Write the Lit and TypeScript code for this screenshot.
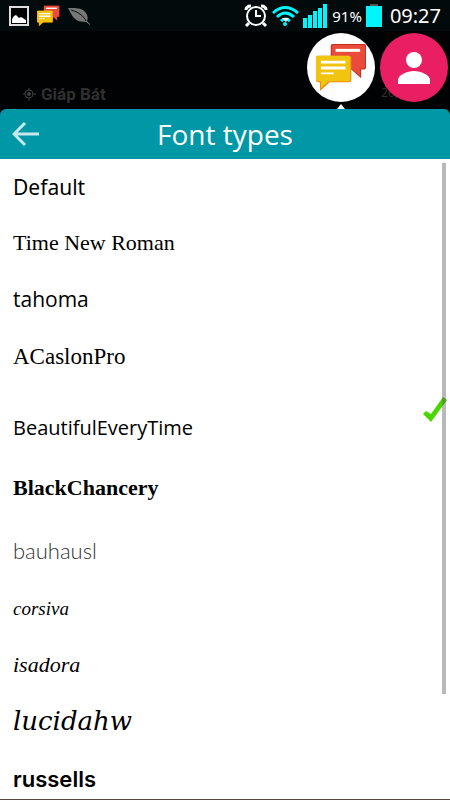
import { LitElement, html, css, svg } from "lit";
import { customElement, property, state } from "lit/decorators.js";

interface FontItem {
  name: string;
  style: string;
}

const FONTS: FontItem[] = [
  { name: "Default", style: "default" },
  { name: "Time New Roman", style: "times" },
  { name: "tahoma", style: "tahoma" },
  { name: "ACaslonPro", style: "caslon" },
  { name: "BeautifulEveryTime", style: "beautiful" },
  { name: "BlackChancery", style: "chancery" },
  { name: "bauhausl", style: "bauhaus" },
  { name: "corsiva", style: "corsiva" },
  { name: "isadora", style: "isadora" },
  { name: "lucidahw", style: "lucida" },
  { name: "russells", style: "russells" },
];

const chatBubbles = svg`
  <path d="M17 1h32q2 0 2 2v22q0 2-2 2h-3v9l-10-9H17q-2 0-2-2V3q0-2 2-2z" fill="#c62f20"/>
  <path d="M18 2h30q2 0 2 2v20q0 2-2 2h-3v8l-9-8H18q-2 0-2-2V4q0-2 2-2z" fill="#e94c3c"/>
  <path d="M20 6h25v3H20z" fill="#fff"/>
  <path d="M2 13h32q2 0 2 2v23q0 2-2 2H14l-10 9v-9H2q-2 0-2-2V15q0-2 2-2z" fill="#ee8d10"/>
  <path d="M2 13h31q2 0 2 2v22q0 2-2 2H13l-8 7v-7H2q-2 0-2-2V15q0-2 2-2z" fill="#f1c40f"/>
  <path d="M5 18h25v3H5zM5 24h25v3H5zM5 30h13v2H5z" fill="#fff"/>`;

@customElement("status-bar")
export class StatusBar extends LitElement {
  static styles = css`
    :host {
      display: flex;
      align-items: center;
      justify-content: space-between;
      height: 31px;
      padding: 0 9px;
      background: #020a0b;
      color: #fff;
      font-family: "Noto Sans", sans-serif;
    }
    .group {
      display: flex;
      align-items: center;
    }
    .left {
      gap: 8px;
    }
    .right {
      gap: 4px;
    }
    svg {
      display: block;
    }
    .percent {
      font-size: 15px;
      line-height: 30px;
    }
    .time {
      margin-left: 4px;
      font-size: 20px;
      line-height: 30px;
    }
  `;

  render() {
    return html`
      <div class="group left">
        <svg width="20" height="20" viewBox="0 0 20 20">
          <path d="M1 1h18v18H1z" fill="#000" stroke="#ddd" stroke-width="2" />
          <path d="M3 17v-4l2-3 2-1 2 2 1 1 2-1 2 1 1 1 2 1v3z" fill="#fff" />
        </svg>
        <svg width="23" height="22" viewBox="0 0 52 50">${chatBubbles}</svg>
        <svg width="23" height="18" viewBox="0 0 23 18">
          <path d="M0 1c6 0 14-1 18 5 2 3 2 6 1 8l3 3v1l-4-3c-5 0-9-1-12-4C3 8 2 4 0 1z" fill="#777" />
          <path d="M3 3c7 2 12 5 15 11" fill="none" stroke="#060d0e" />
        </svg>
      </div>
      <div class="group right">
        <svg width="24" height="24" viewBox="0 0 24 24" fill="none" stroke="#fff">
          <circle cx="12" cy="12" r="9" stroke-width="2" />
          <path d="M12 6v6h5" stroke-width="2" />
          <path d="M2 6q0-4 5-4M22 6q0-4-5-4" stroke-width="3" />
          <path d="M5 19l-3 3M19 19l3 3" stroke-width="3" />
        </svg>
        <svg width="27" height="22" viewBox="0 0 27 22">
          <g fill="none" stroke="#00f6ff" stroke-width="3">
            <path d="M1 8q12-11 25 0" />
            <path d="M5 12q8-8 17 0" />
            <path d="M9 16q4-4 9 0" />
          </g>
          <path d="M10 13h7l-3 4z" fill="#fff" />
          <circle cx="13" cy="19" r="2" fill="#00f6ff" />
        </svg>
        <svg width="25" height="24" viewBox="0 0 25 24" fill="#00f6ff">
          <path d="M0 14h4v10H0zM5 11h4v13H5zM10 7h4v17h-4zM15 4h4v20h-4zM20 0h4v24h-4z" />
        </svg>
        <span class="percent">91%</span>
        <svg width="16" height="23" viewBox="0 0 16 23">
          <path d="M4 0h8v2H4z" fill="#555" />
          <path d="M0 2h16v21H0z" fill="#00f6ff" />
        </svg>
        <span class="time">09:27</span>
      </div>
    `;
  }
}

@customElement("font-option")
export class FontOption extends LitElement {
  @property({ attribute: false }) item!: FontItem;
  @property({ type: Boolean }) selected = false;

  static styles = css`
    :host {
      display: block;
    }
    .row {
      display: flex;
      align-items: center;
      justify-content: space-between;
      box-sizing: border-box;
      height: 56px;
      padding: 0 3px 0 13px;
      color: #000;
      cursor: pointer;
      position: relative;
    }
    .radio {
      position: absolute;
      inset: 0;
      margin: 0;
      opacity: 0;
      cursor: pointer;
    }
    .check {
      display: block;
      align-self: flex-start;
    }
    .default {
      font: 21px "Noto Sans", sans-serif;
    }
    .tahoma {
      font: 21px "Open Sans", sans-serif;
    }
    .times {
      font: 22px "Liberation Serif", serif;
    }
    .caslon {
      height: 60px;
      font: 23px "Liberation Serif", serif;
    }
    .beautiful {
      height: 70px;
      padding-top: 10px;
      font: 20px "Open Sans", sans-serif;
    }
    .chancery {
      height: 62px;
      font: bold 22px "Liberation Serif", serif;
    }
    .bauhaus {
      height: 62px;
      font: 300 22px "Lato", sans-serif;
      color: #333;
    }
    .corsiva {
      font: italic 19px "Liberation Serif", serif;
    }
    .isadora {
      font: italic 22px "Liberation Serif", serif;
    }
    .lucida {
      font: italic 26px "DejaVu Serif", serif;
    }
    .russells {
      height: 60px;
      font: 600 22px "Inter", sans-serif;
    }
  `;

  render() {
    return html`
      <label class="row ${this.item.style}">
        <input
          class="radio"
          type="radio"
          name="font"
          .checked=${this.selected}
          @change=${() =>
            this.dispatchEvent(new CustomEvent("pick", { detail: this.item.name }))}
        />
        <span>${this.item.name}</span>
        ${this.selected
          ? html`<svg class="check" width="24" height="26" viewBox="0 0 24 26">
              <path d="M0 17l3-3 5 3L20 0l4 3L8 25z" fill="#4cd600" />
            </svg>`
          : ""}
      </label>
    `;
  }
}

@customElement("app-root")
export class AppRoot extends LitElement {
  @state() private current = "BeautifulEveryTime";

  static styles = css`
    :host {
      display: flex;
      flex-direction: column;
      height: 100vh;
      box-sizing: border-box;
      background: #000203;
      border-bottom: 1px solid #5b4640;
      font-family: "Noto Sans", sans-serif;
    }
    svg {
      display: block;
    }
    .backdrop {
      display: flex;
      justify-content: space-between;
      flex: none;
      height: 78px;
      padding-left: 23px;
    }
    .place {
      display: flex;
      align-items: center;
      align-self: flex-end;
      gap: 5px;
      color: #303030;
      font: bold 17px/30px "Roboto", sans-serif;
    }
    .heads {
      display: flex;
      gap: 5px;
      padding: 2px 2px 0 0;
      position: relative;
    }
    .head {
      display: grid;
      place-items: center;
      width: 68px;
      height: 69px;
      padding: 0;
      border: 0;
      border-radius: 50%;
      background: #fff;
      position: relative;
    }
    .account {
      background: #e91e63;
    }
    .date {
      position: absolute;
      right: 52px;
      bottom: 7px;
      color: #303030;
      font-size: 12px;
      line-height: 18px;
    }
    .pointer {
      position: absolute;
      left: 30px;
      bottom: 0;
    }
    .header {
      display: grid;
      grid-template-columns: 50px 1fr 50px;
      align-items: center;
      flex: none;
      height: 50px;
      border-radius: 6px 6px 0 0;
      background: #0097a7;
      color: #fff;
    }
    .back {
      padding: 0 0 0 12px;
      border: 0;
      background: none;
    }
    .title {
      margin: 0;
      font: 28px/40px "Open Sans", sans-serif;
      text-align: center;
    }
    .list {
      flex: 1;
      min-height: 0;
      overflow: hidden;
      position: relative;
      background: #fff;
    }
    .thumb {
      position: absolute;
      top: 4px;
      right: 4px;
      width: 4px;
      height: 83%;
      background: rgba(80, 80, 80, 0.4);
      pointer-events: none;
    }
  `;

  render() {
    return html`
      <status-bar></status-bar>
      <div class="backdrop">
        <div class="place">
          <svg width="13" height="13" viewBox="0 0 13 13">
            <circle cx="6" cy="6" r="4" fill="none" stroke="#404040" />
            <circle cx="6" cy="6" r="2" fill="#404040" />
            <path d="M6 0v2M6 10v3M0 6h2M10 6h3" stroke="#404040" />
          </svg>
          <span>Giáp Bát</span>
        </div>
        <div class="heads">
          <span class="date">20,</span>
          <button class="head" aria-label="Messages">
            <svg width="51" height="49" viewBox="0 0 52 50">${chatBubbles}</svg>
          </button>
          <button class="head account" aria-label="Account">
            <svg width="32" height="32" viewBox="0 0 32 32" fill="#fff">
              <circle cx="16" cy="8" r="8" />
              <path d="M0 32v-4c0-5 9-9 16-9s16 4 16 9v4z" />
            </svg>
          </button>
          <svg class="pointer" width="8" height="5" viewBox="0 0 8 5">
            <path d="M4 0l4 5H0z" fill="#fff" />
          </svg>
        </div>
      </div>
      <header class="header">
        <button class="back" aria-label="Back">
          <svg width="27" height="26" viewBox="0 0 27 26" fill="none" stroke="#c5e9ed" stroke-width="3">
            <path d="M13 2L2 13l11 11M2 13h25" />
          </svg>
        </button>
        <h1 class="title">Font types</h1>
      </header>
      <main class="list" role="radiogroup" aria-label="Font types">
        ${FONTS.map(
          (f) => html`<font-option
            .item=${f}
            .selected=${this.current === f.name}
            @pick=${(e: CustomEvent<string>) => (this.current = e.detail)}
          ></font-option>`
        )}
        <div class="thumb"></div>
      </main>
    `;
  }
}
